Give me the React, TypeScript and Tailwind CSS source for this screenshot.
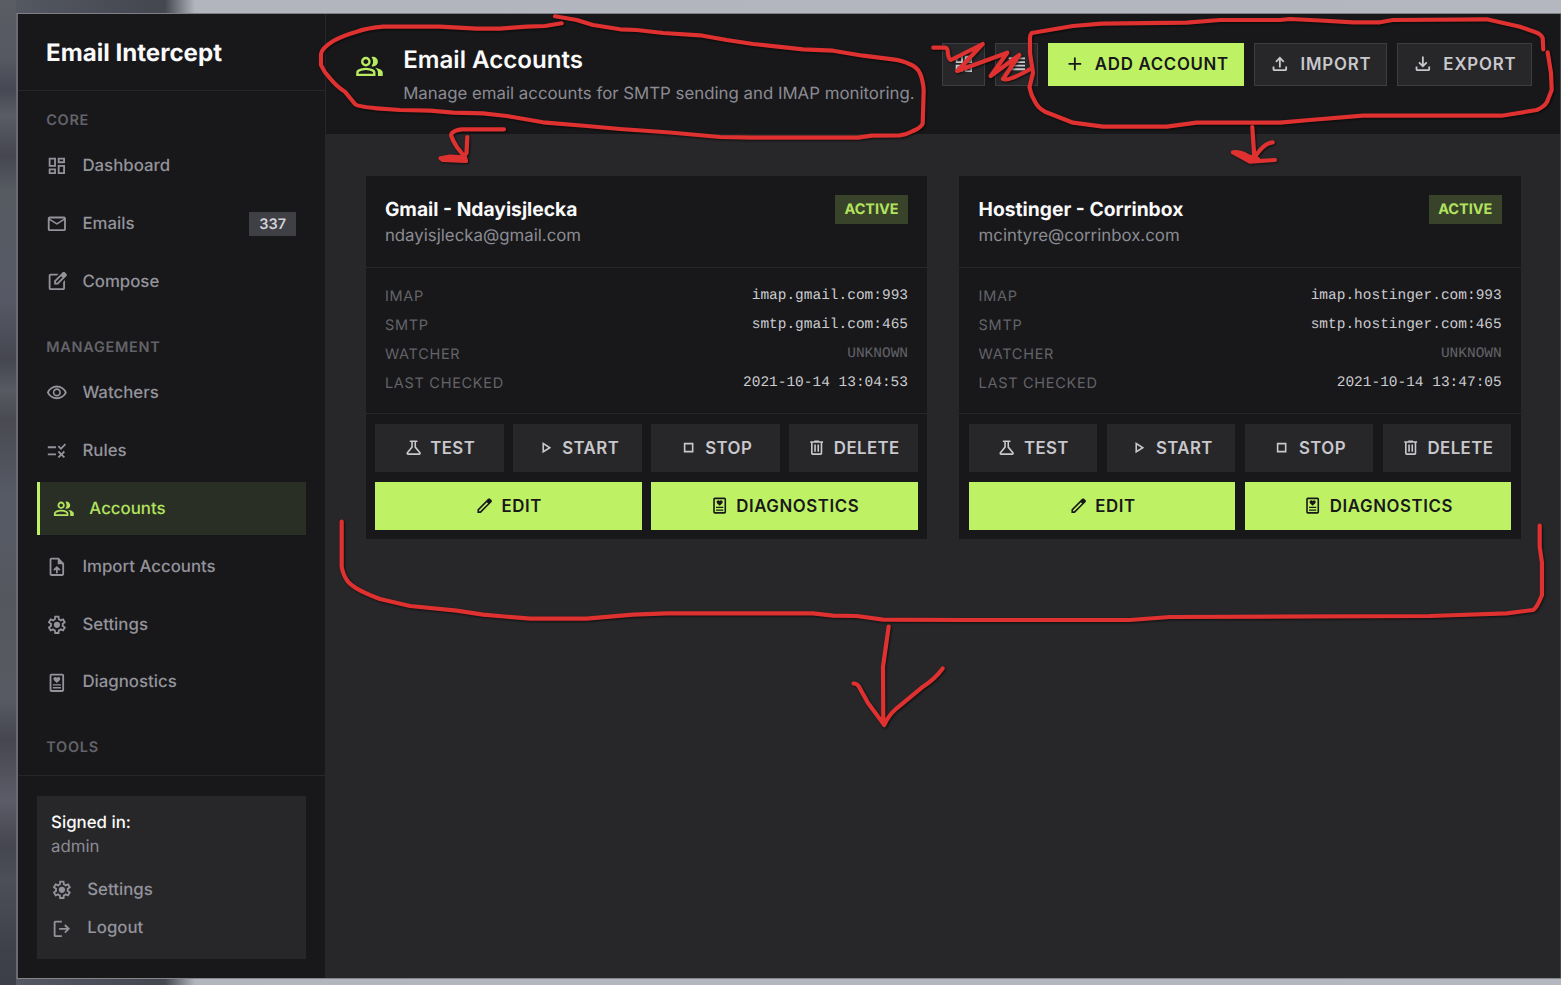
import React from "react";

const ICONS = {
  dashboard:
    "M13 9V3h8v6zM3 13V3h8v10zm10 8V11h8v10zM3 21v-6h8v6zm2-10h4V5H5zm10 8h4v-6h-4zm0-12h4V5h-4zM5 19h4v-2H5z",
  mail: "M4 20q-.825 0-1.412-.587T2 18V6q0-.825.588-1.412T4 4h16q.825 0 1.413.588T22 6v12q0 .825-.587 1.413T20 20zm8-7L4 8v10h16V8zm0-2l8-5H4zM4 8V6v12z",
  compose:
    "M5 21q-.825 0-1.412-.587T3 19V5q0-.825.588-1.412T5 3h8.925l-2 2H5v14h14v-6.95l2-2V19q0 .825-.587 1.413T19 21zm4-6v-4.25l9.175-9.175q.3-.3.675-.45t.75-.15q.4 0 .763.15t.662.45L22.425 3q.275.3.425.663T23 4.4t-.137.738t-.438.662L13.25 15zM11 13h1.4l5.8-5.8l-.7-.7l-.725-.7L11 11.575z",
  eye: "M12 16q1.875 0 3.188-1.312T16.5 11.5t-1.312-3.187T12 7T8.813 8.313T7.5 11.5t1.313 3.188T12 16m0-1.8q-1.125 0-1.912-.788T9.3 11.5t.788-1.912T12 8.8t1.913.788t.787 1.912t-.787 1.913T12 14.2m0 4.8q-3.65 0-6.65-2.037T1 11.5q1.35-3.425 4.35-5.462T12 4t6.65 2.038T23 11.5q-1.35 3.425-4.35 5.463T12 19m0-2q2.825 0 5.188-1.487T20.8 11.5q-1.25-2.525-3.613-4.012T12 6T6.813 7.488T3.2 11.5q1.25 2.525 3.613 4.013T12 17",
  rule: "M16.54 11L13 7.46l1.41-1.41 2.12 2.12 4.24-4.24 1.41 1.41L16.54 11zM11 7H2v2h9V7zm10 6.41L19.59 12 17 14.59 14.41 12 13 13.41 15.59 16 13 18.59 14.41 20 17 17.41 19.59 20 21 18.59 18.41 16 21 13.41zM11 15H2v2h9v-2z",
  group:
    "M1 20v-2.8q0-.85.438-1.562T2.6 14.55q1.55-.775 3.15-1.162T9 13t3.25.388t3.15 1.162q.725.375 1.163 1.088T17 17.2V20zm18 0v-3q0-1.1-.612-2.113T16.65 13.15q1.275.15 2.4.513t2.1.887q.9.5 1.375 1.112T23 17v3zM9 12q-1.65 0-2.825-1.175T5 8t1.175-2.825T9 4t2.825 1.175T13 8t-1.175 2.825T9 12m10-4q0 1.65-1.175 2.825T15 12q-.275 0-.7-.062t-.7-.138q.675-.8 1.038-1.775T15 8t-.362-2.025T13.6 4.2q.35-.125.7-.163T15 4q1.65 0 2.825 1.175T19 8M3 18h12v-.8q0-.275-.137-.5t-.363-.35q-1.35-.675-2.725-1.012T9 15t-2.775.338T3.5 16.35q-.225.125-.363.35T3 17.2zm6-8q.825 0 1.413-.587T11 8t-.587-1.412T9 6t-1.412.588T7 8t.588 1.413T9 10",
  uploadFile:
    "M14 2H6c-1.1 0-1.99.9-1.99 2L4 20c0 1.1.89 2 1.99 2H18c1.1 0 2-.9 2-2V8l-6-6zm4 18H6V4h7v5h5v11zM8 15.01l1.41 1.41L11 14.84V19h2v-4.16l1.59 1.59L16 15.01 12.01 11 8 15.01z",
  settings:
    "m9.25 22l-.4-3.2q-.325-.125-.612-.3t-.563-.375L4.7 19.375l-2.75-4.75l2.575-1.95Q4.5 12.5 4.5 12.338v-.675q0-.163.025-.338L1.95 9.375l2.75-4.75l2.975 1.25q.275-.2.575-.375t.6-.3l.4-3.2h5.5l.4 3.2q.325.125.613.3t.562.375l2.975-1.25l2.75 4.75l-2.575 1.95q.025.175.025.338v.674q0 .163-.05.338l2.575 1.95l-2.75 4.75l-2.95-1.25q-.275.2-.575.375t-.6.3l-.4 3.2zM11 20h1.975l.35-2.65q.775-.2 1.438-.587t1.212-.938l2.475 1.025l.975-1.7l-2.15-1.625q.125-.35.175-.737T17.5 12t-.05-.787t-.175-.738l2.15-1.625l-.975-1.7l-2.475 1.05q-.55-.575-1.212-.962t-1.438-.588L13 4h-1.975l-.35 2.65q-.775.2-1.437.588t-1.213.937L5.55 7.15l-.975 1.7l2.15 1.6q-.125.375-.175.75t-.05.8q0 .4.05.775t.175.75l-2.15 1.625l.975 1.7l2.475-1.05q.55.575 1.213.963t1.437.587zm1.05-4.5q1.45 0 2.475-1.025T15.55 12t-1.025-2.475T12.05 8.5q-1.475 0-2.488 1.025T8.55 12t1.013 2.475T12.05 15.5",
  diagnostics:
    "M6 22q-.825 0-1.412-.587T4 20V4q0-.825.588-1.412T6 2h12q.825 0 1.413.588T20 4v16q0 .825-.587 1.413T18 22zm0-2h12V4H6zM7.5 15v-1.5h9V15zm0 3.2v-1.5h9v1.5zM12 12.2l-3-2.9q-.8-.8-.8-1.8q0-.9.6-1.5t1.5-.6q1 0 1.7.9q.7-.9 1.7-.9q.9 0 1.5.6t.6 1.5q0 1-.8 1.8z",
  logout:
    "M5 21q-.825 0-1.412-.587T3 19V5q0-.825.588-1.412T5 3h7v2H5v14h7v2zm11-4l-1.375-1.45l2.55-2.55H9v-2h8.175l-2.55-2.55L16 7l5 5z",
  add: "M11 13H5v-2h6V5h2v6h6v2h-6v6h-2z",
  upload:
    "M11 16V7.85l-2.6 2.6L7 9l5-5l5 5l-1.4 1.45l-2.6-2.6V16zm-5 4q-.825 0-1.412-.587T4 18v-3h2v3h12v-3h2v3q0 .825-.587 1.413T18 20z",
  download:
    "m12 16l-5-5l1.4-1.45l2.6 2.6V4h2v8.15l2.6-2.6L17 11zm-6 4q-.825 0-1.412-.587T4 18v-3h2v3h12v-3h2v3q0 .825-.587 1.413T18 20z",
  flask:
    "M5 21q-1.275 0-1.812-1.137t.262-2.113L9 11V5H8q-.425 0-.712-.288T7 4t.288-.712T8 3h8q.425 0 .713.288T17 4t-.288.713T16 5h-1v6l5.55 6.75q.8.975.263 2.113T19 21zm0-2h14l-6-7.3V5h-2v6.7z",
  play: "M8 19V5l11 7zm2-3.65L15.25 12L10 8.65z",
  stop: "M6 18V6h12v12zm2-2h8V8H8z",
  trash:
    "M7 21q-.825 0-1.412-.587T5 19V6H4V4h5V3h6v1h5v2h-1v13q0 .825-.587 1.413T17 21zM17 6H7v13h10zM9 17h2V8H9zm4 0h2V8h-2z",
  pencil:
    "M5 19h1.425L16.2 9.225L14.775 7.8L5 17.575zm-2 2v-4.25L16.2 3.575q.3-.275.663-.425t.762-.15t.775.15t.65.45L20.425 5q.3.275.438.65T21 6.4q0 .4-.137.763t-.438.662L7.25 21z",
  grid: "M3 11V3h8v8zm0 10v-8h8v8zm10-10V3h8v8zm0 10v-8h8v8zM5 9h4V5H5zm10 0h4V5h-4zm0 10h4v-4h-4zM5 19h4v-4H5z",
  list: "M3 7V5h18v2zm0 4V9h18v2zm0 4v-2h18v2zm0 4v-2h18v2z",
};

type IconName = keyof typeof ICONS;

function Icon({ name, className = "size-4.5" }: { name: IconName; className?: string }) {
  return (
    <svg viewBox="0 0 24 24" fill="currentColor" fillRule="evenodd" className={`shrink-0 ${className}`}>
      <path d={ICONS[name]} />
    </svg>
  );
}

function NavItem({ icon, label, active, badge }: { icon: IconName; label: string; active?: boolean; badge?: string }) {
  return (
    <a
      className={`flex h-11 items-center gap-3 pr-2 text-sm font-medium ${
        active ? "border-l-3 border-[#bef264] bg-[#2a2f25] pl-[13.6px] text-[#b2e35f]" : "pl-2 text-[#93939b]"
      }`}
    >
      <Icon name={icon} />
      <span>{label}</span>
      {badge && (
        <span className="ml-auto bg-[#3f3f46] px-[10px] py-0.5 text-xs font-semibold text-[#d0d0d5]">{badge}</span>
      )}
    </a>
  );
}

function NavLabel({ children }: { children: React.ReactNode }) {
  return <div className="mb-2 px-2 text-xs font-semibold tracking-wider text-[#636369]">{children}</div>;
}

function Sidebar() {
  return (
    <aside className="flex w-[308px] shrink-0 flex-col border-r border-[#27272a] bg-[#18181a]">
      <div className="flex h-[77px] shrink-0 items-center border-b border-[#27272a] px-[28px] pt-px text-xl font-bold text-[#fafafa]">
        Email Intercept
      </div>
      <nav className="flex min-h-0 flex-1 flex-col gap-6 overflow-hidden pt-[19.9px] pr-[19.4px] pl-[18.6px]">
        <div>
          <NavLabel>CORE</NavLabel>
          <div className="flex flex-col gap-1">
            <NavItem icon="dashboard" label="Dashboard" />
            <NavItem icon="mail" label="Emails" badge="337" />
            <NavItem icon="compose" label="Compose" />
          </div>
        </div>
        <div>
          <NavLabel>MANAGEMENT</NavLabel>
          <div className="flex flex-col gap-1">
            <NavItem icon="eye" label="Watchers" />
            <NavItem icon="rule" label="Rules" />
            <NavItem icon="group" label="Accounts" active />
            <NavItem icon="uploadFile" label="Import Accounts" />
            <NavItem icon="settings" label="Settings" />
            <NavItem icon="diagnostics" label="Diagnostics" />
          </div>
        </div>
        <NavLabel>TOOLS</NavLabel>
      </nav>
      <div className="shrink-0 border-t border-[#27272a] pt-4 pr-[19.4px] pb-[18.8px] pl-[18.6px]">
        <div className="bg-[#27272a] px-3 pt-[15px] pb-[14px] text-sm">
          <div className="font-medium text-[#fafafa]">Signed in:</div>
          <div className="text-[#8b8b93]">admin</div>
          <div className="mt-3 flex flex-col gap-1 font-medium text-[#93939b]">
            <a className="flex items-center gap-3 py-1">
              <Icon name="settings" />
              Settings
            </a>
            <a className="flex items-center gap-3 py-1">
              <Icon name="logout" />
              Logout
            </a>
          </div>
        </div>
      </div>
    </aside>
  );
}

function HeaderButton({ icon, label, primary }: { icon: IconName; label?: string; primary?: boolean }) {
  return (
    <button
      className={`flex h-9 items-center gap-2 border text-sm font-semibold whitespace-nowrap ${
        label ? "px-3" : "w-[43.6px] justify-center"
      } ${
        primary
          ? "w-[196px] border-[#bef264] bg-[#bef264] tracking-[0.042em] text-[#18181b]"
          : "border-[#3c3c41] bg-[#27272a] tracking-wider text-[#c8c8cd]"
      }`}
    >
      <Icon name={icon} />
      {label}
    </button>
  );
}

function CardButton({ icon, label, primary }: { icon: IconName; label: string; primary?: boolean }) {
  return (
    <button
      className={`flex h-10 items-center justify-center gap-1.5 text-sm font-semibold ${
        primary ? "col-span-2 bg-[#bef264] tracking-[0.035em] text-[#18181b]" : "bg-[#27272a] tracking-wide text-[#c8c8cd]"
      }`}
    >
      <Icon name={icon} className="size-4" />
      {label}
    </button>
  );
}

type Account = { name: string; email: string; imap: string; smtp: string; checked: string };

const ACCOUNTS: Account[] = [
  {
    name: "Gmail - Ndayisjlecka",
    email: "ndayisjlecka@gmail.com",
    imap: "imap.gmail.com:993",
    smtp: "smtp.gmail.com:465",
    checked: "2021-10-14 13:04:53",
  },
  {
    name: "Hostinger - Corrinbox",
    email: "mcintyre@corrinbox.com",
    imap: "imap.hostinger.com:993",
    smtp: "smtp.hostinger.com:465",
    checked: "2021-10-14 13:47:05",
  },
];

function DetailRow({ label, value, muted }: { label: string; value: string; muted?: boolean }) {
  return (
    <div className="flex h-[19.4px] items-start justify-between text-xs">
      <span className="leading-[19.3px] tracking-wider text-[#636369]">{label}</span>
      <span
        className={`font-['Liberation_Mono',monospace] leading-[19.3px] ${muted ? "text-[#636369]" : "text-[#cbcbd0]"}`}
      >
        {value}
      </span>
    </div>
  );
}

function AccountCard({ account }: { account: Account }) {
  return (
    <section className="bg-[#18181a]">
      <div className="flex items-start justify-between border-b border-[#27272a] pt-4 pr-[19px] pb-[18.8px] pl-4">
        <div>
          <h2 className="text-base font-bold text-[#fafafa]">{account.name}</h2>
          <p className="text-sm text-[#8b8b93]">{account.email}</p>
        </div>
        <span className="-mt-[0.4px] bg-[#39432a] px-2 pt-1 pb-[5px] text-xs font-bold text-[#b2e35f]">ACTIVE</span>
      </div>
      <div className="flex flex-col gap-2 border-b border-[#27272a] px-4 pt-[19.2px] pb-[19px]">
        <DetailRow label="IMAP" value={account.imap} />
        <DetailRow label="SMTP" value={account.smtp} />
        <DetailRow label="WATCHER" value="UNKNOWN" muted />
        <DetailRow label="LAST CHECKED" value={account.checked} />
      </div>
      <div className="grid grid-cols-4 gap-2 px-2 pt-[10px] pb-2">
        <CardButton icon="flask" label="TEST" />
        <CardButton icon="play" label="START" />
        <CardButton icon="stop" label="STOP" />
        <CardButton icon="trash" label="DELETE" />
        <CardButton icon="pencil" label="EDIT" primary />
        <CardButton icon="diagnostics" label="DIAGNOSTICS" primary />
      </div>
    </section>
  );
}

const STROKES = [
  "M561.7 23.3L545 26L526.7 26.7L500 28.7L476.7 28.7L440 26.7L383.3 26.7Q368 28 356.7 31.7Q342 36 333.3 41Q322 48 321 54L321 65Q324 72 330 78.3Q337 87 345 91.7L355 104Q357 106.5 376.7 108.3L400 110L430 110.7L453 112.7L483 113.3L506.7 116L543 122.3L586.7 126L620 129L670 132.5L720 137L753 137.7L858 137.7L871.7 135.7L900 135.3Q907 134.5 913 131Q922 127 922.7 123.3L923.7 90Q923 80 920 73.3Q917 67 910 64.3Q903 60.5 893 59.3L863 55.7L833 50.7L803 49.3L753 44L726.7 40L700 35.3L663 33L636.7 30L620 29.3L593 25L576.7 20L555 16.3",
  "M504 129.3L461.7 129.3Q455 130 452 133Q450.5 135 451.7 137Q453 141 456.7 146.7L464 156L466.5 153L467.3 137",
  "M440.5 158.3L450 156.5L465 157.5L466 161L443 160Z",
  "M933.3 47.7L945 47.7Q948 48 948 54Q949 60 951 60L982.7 44L957.3 71L1007.3 52.7L990.7 76L1019.3 55L1003 79Q1008 82 1031.7 68.3",
  "M1543.3 49.3L1542.7 38Q1541 34 1535 32L1520 26.7L1486.7 19.3L1393 20L1380 22.3L1353 22.3L1320 20.5L1290 19L1280 20L1220 20L1186.7 22.7L1101.7 23.7L1073 26L1031.7 33Q1029.5 35 1030 40L1030 53L1033 73L1029.5 87.3Q1031 95 1035 101.7Q1038 108 1045 111.7L1073 122.7L1103 126.7L1166.7 126.7L1196.7 122.7L1280 122.7L1310 120L1363 115.7L1501.7 115.7L1536.7 110Q1544 107 1547 102L1551.7 90L1551 73L1547.7 52.3",
  "M1252.3 127L1254.3 157M1233 152.3Q1243 151 1253 160Q1263 143 1272.7 142.3M1234 153L1250 161.7L1275 160M1244 155L1258 159",
  "M341.7 521.5L341.7 566.7Q343 575 348 581.7Q355 590 380 599L410 606L456.7 610.7L483 614.7L530 618.7L586.7 618.7L633 614.7L666.7 613.3L813 613.3L833 615.7L856.7 616L883 619.7L963 620L1130 620L1170 617L1430 616L1506.7 613.3L1533 610Q1537 608 1542 595L1542 563L1539.7 546.7L1539.7 525.5",
  "M888.7 626.5L883 666.7L883.3 722M853.5 683.5Q857 683.5 859 686.7L868 703L884.3 725Q888 716 896.7 708.3L923 686.7Q935 679 942.7 668.5",
];

function Annotations() {
  return (
    <svg
      viewBox="0 0 1561 985"
      className="pointer-events-none absolute inset-0 h-[985px] w-[1561px] drop-shadow-[1px_1.5px_1px_rgba(0,0,0,0.65)]"
      fill="none"
      stroke="#e03131"
      strokeWidth="4.2"
      strokeLinecap="round"
      strokeLinejoin="round"
    >
      {STROKES.map((d) => (
        <path key={d} d={d} />
      ))}
    </svg>
  );
}

export default function App() {
  return (
    <div className="relative h-[985px] w-[1561px] overflow-hidden bg-[linear-gradient(90deg,#565a63_0px,#454751_150px,#454751_165px,#b2b5be_195px,#b4b7c0_100%)] font-['Inter',sans-serif] antialiased [--spacing:4.825px] [--text-base:19.25px] [--text-sm:16.82px] [--text-xl:24.12px] [--text-xs:14.47px] [text-rendering:geometricPrecision]">
      <div className="flex h-full flex-col bg-[linear-gradient(180deg,#5a5d64_0px,#555861_60px,#464853_90px,#5a5d65_115px,#454650_155px,#565a61_190px,#565965_300px,#454650_360px,#575a62_390px,#494a52_420px,#575b66_500px,#55575f_600px,#575a62_700px,#454650_740px,#5b5c67_800px,#454650_845px,#4c4f57_880px,#3e4149_950px,#3c3f48_985px)] bg-[length:16px_985px] bg-no-repeat pt-[13px] pb-[6px] pl-[16px]">
        <div className="flex min-h-0 flex-1 border-t border-b border-l-2 border-t-[#7e8087] border-b-[#85868c] border-l-[#6a6b72] bg-[#27272a]">
          <Sidebar />
          <main className="flex min-w-0 flex-1 flex-col border-r border-[#46464a]">
            <header className="flex h-[121px] shrink-0 items-start justify-between border-b border-[#27272a] bg-[#18181a] pt-[28.6px] pr-[28px] pl-6">
              <div className="flex items-start gap-4">
                <Icon name="group" className="mt-[9.4px] size-6 text-[#b8eb62]" />
                <div>
                  <h1 className="text-xl font-semibold text-[#fafafa]">Email Accounts</h1>
                  <p className="mt-[5.8px] text-sm whitespace-nowrap text-[#8b8b93]">
                    Manage email accounts for SMTP sending and IMAP monitoring.
                  </p>
                </div>
              </div>
              <div className="flex gap-[9.6px]">
                <HeaderButton icon="grid" />
                <HeaderButton icon="list" />
                <HeaderButton icon="add" label="ADD ACCOUNT" primary />
                <HeaderButton icon="upload" label="IMPORT" />
                <HeaderButton icon="download" label="EXPORT" />
              </div>
            </header>
            <div className="grid grid-cols-2 items-start gap-[32px] pt-[41px] pr-[39px] pl-[39.6px]">
              {ACCOUNTS.map((account) => (
                <AccountCard key={account.email} account={account} />
              ))}
            </div>
          </main>
        </div>
      </div>
      <Annotations />
    </div>
  );
}
